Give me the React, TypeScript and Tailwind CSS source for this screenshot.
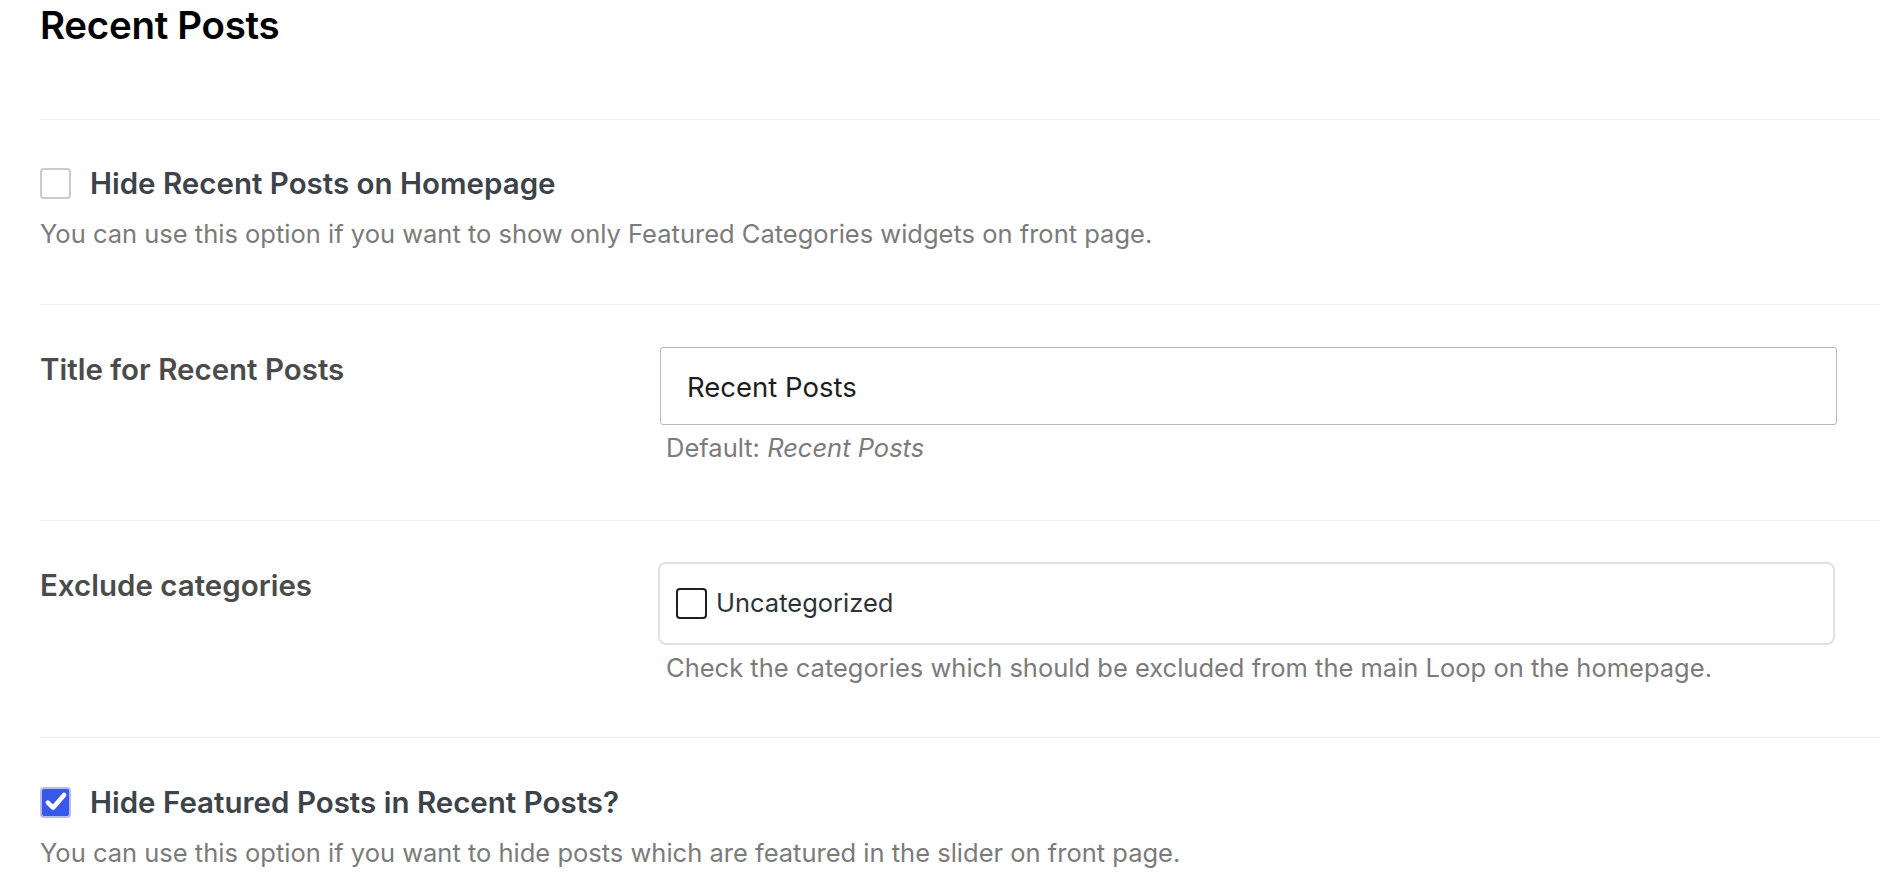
import React from "react";

function Checkbox({ checked }: { checked?: boolean }) {
  if (checked) {
    return (
      <span className="flex h-[31px] w-[31px] shrink-0 items-center justify-center rounded-[4px] border-2 border-[#b8bdf0] bg-[#3858e9]">
        <svg viewBox="0 0 24 24" className="h-[26px] w-[26px]" fill="none" stroke="white" strokeWidth="4.2" strokeLinecap="round" strokeLinejoin="round">
          <path d="M4.5 12.5l4.8 4.8L19.5 5.5" />
        </svg>
      </span>
    );
  }
  return <span className="block h-[31px] w-[31px] shrink-0 rounded-[4px] border-2 border-[#c9cacc] bg-white" />;
}

function Divider() {
  return <div className="h-px w-full bg-[#ededed]" />;
}

export default function App() {
  return (
    <div className="min-h-screen bg-white pl-[40px] pr-[24px] font-['Inter',sans-serif]">
      <h2 className="text-[38.5px] leading-[50px] font-semibold tracking-[-0.3px] text-black">Recent Posts</h2>

      <div className="mt-[69px]">
        <Divider />
      </div>

      {/* Hide on homepage */}
      <div className="pt-[45px] pb-[52px]">
        <label className="flex h-[36px] items-center gap-[19px]">
          <Checkbox />
          <span className="text-[29.5px] font-semibold text-[#3c434a]">Hide Recent Posts on Homepage</span>
        </label>
        <p className="mt-[15px] text-[25.5px] leading-[36px] text-[#7b7b7b]">
          You can use this option if you want to show only Featured Categories widgets on front page.
        </p>
      </div>

      <Divider />

      {/* Title */}
      <div className="flex pt-[42px] pb-[54px]">
        <div className="w-[620px] shrink-0 pt-[4px] text-[29.5px] leading-[36px] font-semibold text-[#4b4b4b]">
          Title for Recent Posts
        </div>
        <div className="flex-1 pr-[43px]">
          <div className="flex h-[78px] items-center rounded-[3px] border border-[#b5b8bc] px-[26px] pt-[4px] text-[27.5px] text-[#1e1e1e]">
            Recent Posts
          </div>
          <p className="mt-[5px] pl-[6px] text-[25.5px] leading-[36px] text-[#7b7b7b]">
            Default: <em>Recent Posts</em>
          </p>
        </div>
      </div>

      <Divider />

      {/* Exclude categories */}
      <div className="flex pt-[41px] pb-[51px]">
        <div className="w-[618px] shrink-0 pt-[5px] text-[29.5px] leading-[36px] font-semibold text-[#4b4b4b]">
          Exclude categories
        </div>
        <div className="flex-1 pr-[45px]">
          <div className="flex h-[83px] items-center gap-[9px] rounded-[8px] border-2 border-[#e1e1e1] px-[16px]">
            <span className="block h-[31px] w-[31px] shrink-0 rounded-[4px] border-2 border-[#1e1e1e] bg-white" />
            <span className="text-[25.5px] text-[#2c3338]">Uncategorized</span>
          </div>
          <p className="mt-[5px] pl-[8px] text-[25.5px] leading-[36px] text-[#7b7b7b]">
            Check the categories which should be excluded from the main Loop on the homepage.
          </p>
        </div>
      </div>

      <Divider />

      {/* Hide featured */}
      <div className="pt-[46px] pb-[20px]">
        <label className="flex h-[36px] items-center gap-[19px]">
          <Checkbox checked />
          <span className="text-[29.5px] font-semibold text-[#3c434a]">Hide Featured Posts in Recent Posts?</span>
        </label>
        <p className="mt-[15px] text-[25.5px] leading-[36px] text-[#7b7b7b]">
          You can use this option if you want to hide posts which are featured in the slider on front page.
        </p>
      </div>
    </div>
  );
}
